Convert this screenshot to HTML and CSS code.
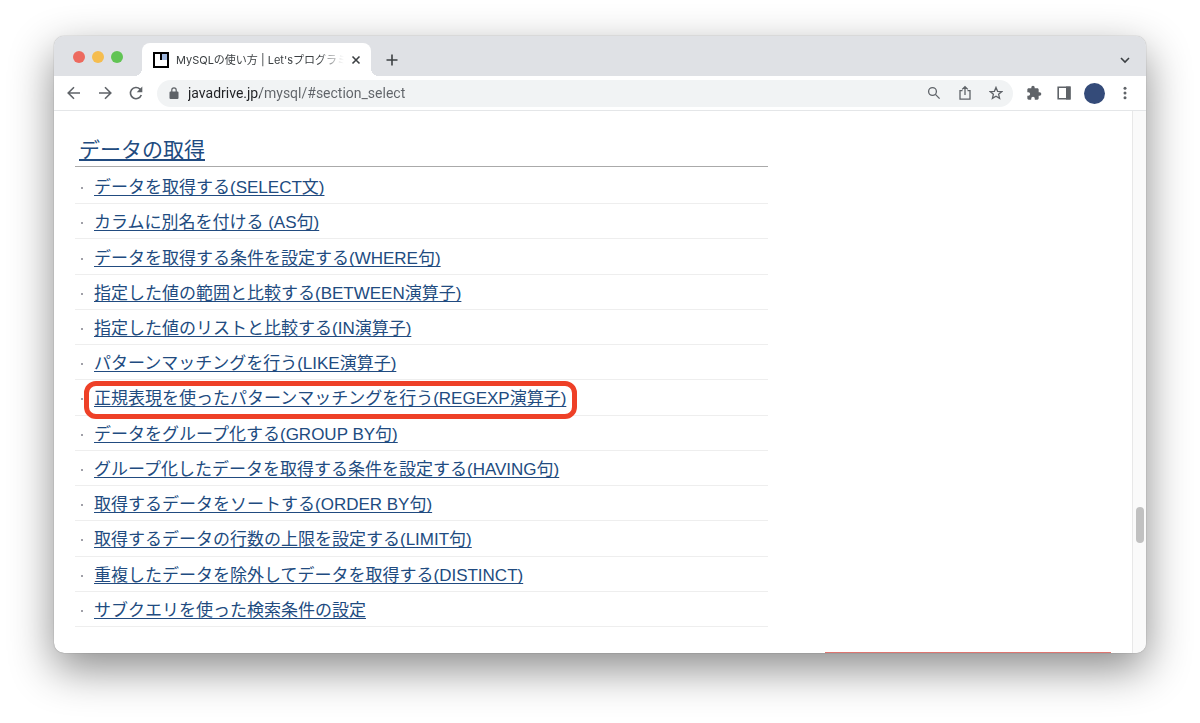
FILE: index.html
```html
<!DOCTYPE html>
<html lang="ja">
<head>
    <meta charset="UTF-8">
    <meta name="viewport" content="width=device-width, initial-scale=1.0">
    <title>MySQLの使い方 | Let'sプログラミング</title>
    <link rel="stylesheet" href="styles.css">
</head>
<body>
    <div class="window">
        <!-- tab bar -->
        <header class="tabbar">
            <div class="lights">
                <button class="red" aria-label="閉じる"></button>
                <button class="yellow" aria-label="最小化"></button>
                <button class="green" aria-label="最大化"></button>
            </div>
            <div class="tab">
                <svg class="favicon" width="16" height="16" viewBox="0 0 16 16">
                    <path fill="#000" d="M0 0h16v16H0z"/>
                    <path fill="#fff" d="M2 2h5v6h7v6H2z"/>
                    <path fill="#9db5dc" d="M9 2h5v6H9z"/>
                </svg>
                <span class="tab-title">MySQLの使い方 | Let'sプログラミ</span>
                <button aria-label="タブを閉じる">
                    <svg width="10" height="10" viewBox="0 0 10 10"><path d="M1.5 1.5l7 7M8.5 1.5l-7 7"/></svg>
                </button>
            </div>
            <button class="new-tab" aria-label="新しいタブ">
                <svg width="12" height="12" viewBox="0 0 12 12"><path d="M6 .5v11M.5 6h11"/></svg>
            </button>
            <button class="tab-search" aria-label="タブを検索">
                <svg width="10" height="10" viewBox="0 0 10 10"><path d="M1 3l4 4 4-4"/></svg>
            </button>
        </header>

        <!-- toolbar -->
        <nav class="toolbar">
            <button aria-label="戻る">
                <svg width="16" height="16" viewBox="0 0 16 16"><path d="M14 8H2.5M8 2.2L2.2 8 8 13.8"/></svg>
            </button>
            <button aria-label="進む">
                <svg width="16" height="16" viewBox="0 0 16 16"><path d="M2 8h11.5M8 2.2L13.8 8 8 13.8"/></svg>
            </button>
            <button aria-label="再読み込み">
                <svg width="16" height="16" viewBox="0 0 16 16"><path d="M13.3 10A5.600 5.600 0 1 1 12 4.100L13.500 5.600"/><path class="fill" d="M14.300 1.600v5.600H8.700z"/></svg>
            </button>
            <form class="omnibox" action="javascript:void(0);">
                <svg class="lock" width="10" height="12" viewBox="0 0 10 12"><path class="fill" d="M1.500 4.500h7a1 1 0 0 1 1 1V11a1 1 0 0 1-1 1h-7a1 1 0 0 1-1-1V5.500a1 1 0 0 1 1-1z"/><path d="M2.800 5V3a2.200 2.200 0 0 1 4.400 0v2" stroke-width="1.200"/></svg>
                <input type="text" name="url" aria-label="アドレス" value="javadrive.jp/mysql/#section_select">
                <button type="button" aria-label="ズーム">
                    <svg class="thin" width="14" height="14" viewBox="0 0 14 14"><circle cx="5.500" cy="5.500" r="3.900"/><path d="M8.400 8.400l4.200 4.200"/></svg>
                </button>
                <button type="button" aria-label="共有">
                    <svg class="thin" width="14" height="16" viewBox="0 0 14 16"><path d="M4.500 5.600H2v8.600h10V5.600H9.500M7 10V2M4.200 4.400L7 1.600l2.800 2.800"/></svg>
                </button>
                <button type="button" aria-label="ブックマーク">
                    <svg class="thin" width="14" height="14" viewBox="0 0 14 14"><path d="M7 1.400l1.600 3.900 4.200.3-3.200 2.700 1 4.100L7 10.200l-3.600 2.200 1-4.100L1.200 5.600l4.200-.3z"/></svg>
                </button>
            </form>
            <button aria-label="拡張機能">
                <svg width="16" height="16" viewBox="0 0 24 24"><path class="fill" d="M20.500 11H19V7c0-1.100-.9-2-2-2h-4V3.500a2.500 2.500 0 0 0-5 0V5H4c-1.100 0-2 .9-2 2v3.800h1.500a2.700 2.700 0 0 1 0 5.400H2V20c0 1.100.9 2 2 2h3.800v-1.500a2.700 2.700 0 0 1 5.400 0V22H17c1.100 0 2-.9 2-2v-4h1.500a2.500 2.500 0 0 0 0-5z"/></svg>
            </button>
            <button aria-label="サイドパネル">
                <svg width="14" height="14" viewBox="0 0 14 14"><path d="M1.200 1.300h11.600v11.400H1.200z"/><path class="fill" d="M9 .5h4.600v13H9z"/></svg>
            </button>
            <button class="avatar" aria-label="プロフィール"></button>
            <button class="menu" aria-label="メニュー">
                <svg width="4" height="14" viewBox="0 0 4 14"><g class="fill"><circle cx="2" cy="2.200" r="1.500"/><circle cx="2" cy="7" r="1.500"/><circle cx="2" cy="11.800" r="1.500"/></g></svg>
            </button>
        </nav>

        <!-- page -->
        <div class="view">
            <div class="page">
                <main>
                    <h3 id="section_select"><a href="#section_select">データの取得</a></h3>
                    <ul>
                        <li><a href="#">データを取得する(SELECT文)</a></li>
                        <li><a href="#">カラムに別名を付ける (AS句)</a></li>
                        <li><a href="#">データを取得する条件を設定する(WHERE句)</a></li>
                        <li><a href="#">指定した値の範囲と比較する(BETWEEN演算子)</a></li>
                        <li><a href="#">指定した値のリストと比較する(IN演算子)</a></li>
                        <li><a href="#">パターンマッチングを行う(LIKE演算子)</a></li>
                        <li><a href="#" class="marked">正規表現を使ったパターンマッチングを行う(REGEXP演算子)</a></li>
                        <li><a href="#">データをグループ化する(GROUP BY句)</a></li>
                        <li><a href="#">グループ化したデータを取得する条件を設定する(HAVING句)</a></li>
                        <li><a href="#">取得するデータをソートする(ORDER BY句)</a></li>
                        <li><a href="#">取得するデータの行数の上限を設定する(LIMIT句)</a></li>
                        <li><a href="#">重複したデータを除外してデータを取得する(DISTINCT)</a></li>
                        <li><a href="#">サブクエリを使った検索条件の設定</a></li>
                    </ul>
                </main>
                <aside></aside>
            </div>
            <div class="track"><div class="thumb"></div></div>
        </div>
    </div>
</body>
</html>
```
FILE: styles.css
```css
* {margin: 0; padding: 0; box-sizing: border-box;}
body {background-color: #ffffff; padding: 36px 54px 70px; font-family: 'Liberation Sans', 'Noto Sans CJK JP', sans-serif;}
button {border: none; background-color: transparent; display: flex; align-items: center; justify-content: center; flex-shrink: 0; cursor: pointer;}
svg {display: block; flex-shrink: 0; fill: none; stroke: #5f6368; stroke-width: 1.6;}
svg .fill {fill: #5f6368; stroke: none;}
svg.thin {stroke-width: 1.3;}

.window {border-radius: 10px; background-color: #ffffff; box-shadow: 0 0 1px rgba(0, 0, 0, 0.5), 0 16px 44px rgba(0, 0, 0, 0.46);}

/* tab bar */
.tabbar {height: 40px; background-color: #dfe1e5; border-radius: 10px 10px 0 0; display: flex; align-items: flex-end; padding: 0 16px 0 19px;}
.lights {display: flex; gap: 7px; height: 38px; align-items: center; margin-right: 19px;}
.lights button {width: 12px; height: 12px; border-radius: 50%;}
.lights .red {background-color: #ed6a5f;}
.lights .yellow {background-color: #f5bd4f;}
.lights .green {background-color: #61c454;}
.tab {position: relative; width: 229px; height: 33px; background-color: #ffffff; border-radius: 8px 8px 0 0; display: flex; align-items: center; padding: 0 10px 0 11px;}
.tab::before, .tab::after {content: ''; position: absolute; bottom: 0; width: 8px; height: 8px;}
.tab::before {left: -8px; background: radial-gradient(circle at 0 0, transparent 8px, #ffffff 8px);}
.tab::after {right: -8px; background: radial-gradient(circle at 100% 0, transparent 8px, #ffffff 8px);}
.tab-title {flex: 1; margin: 0 7px; overflow: hidden; white-space: nowrap; font: 11px/18px Inter, 'Noto Sans CJK JP', sans-serif; color: #3c4043; mask-image: linear-gradient(90deg, #000000 85%, transparent);}
.tab svg, .new-tab svg, .tab-search svg {stroke: #3c4043;}
.tab .favicon {stroke: none;}
.new-tab {width: 28px; height: 33px; margin-left: 7px;}
.tab-search {height: 33px; margin-left: auto;}

/* toolbar */
.toolbar {height: 35px; border-bottom: 1px solid #e4e6e8; display: flex; align-items: center; gap: 15px; padding: 0 19px 0 12px;}
.omnibox {flex: 1; height: 27px; border-radius: 14px; background-color: #f1f3f4; display: flex; align-items: center; gap: 17px; padding: 0 10px 0 12px; margin: 0 -2px;}
.omnibox input {flex: 1; min-width: 0; margin-left: -8px; border: none; outline: none; font: 14px/18px Roboto, 'Noto Sans CJK JP', sans-serif; color: transparent; background: linear-gradient(90deg, #202124 72px, #5f6368 72px); background-clip: text;}
.avatar {width: 21px; height: 21px; border-radius: 50%; background-color: #344b79; margin: 0 3px 0 -2px;}

/* page */
.view {display: flex; border-radius: 0 0 10px 10px; overflow: hidden;}
.page {flex: 1; display: flex; gap: 57px; padding: 23px 21px 0;}
main {flex: 1; padding-bottom: 26px;}
a {color: #214b80; text-decoration: underline; text-decoration-skip-ink: none; text-underline-offset: 2px;}
h3 {height: 33px; padding-left: 4px; border-bottom: 1px solid #aaaaaa; font-size: 21px; line-height: 32px; font-weight: 400;}
/* 13 even rows */
ul {list-style-type: none; display: grid; grid-auto-rows: 1fr; height: 458px; margin-top: 2px;}
li {display: flex; align-items: center; border-bottom: 1px solid #eeeeee; font-size: 17px; line-height: 26px; padding: 4px 0 0 6px;}
li::before {content: ''; width: 2px; height: 2px; margin-right: 11px; background-color: #a0a0a8;}
.marked {position: relative;}
.marked::after {content: ''; position: absolute; inset: -5px -11px -7px -10px; border: 5px solid #ee4027; border-radius: 12px;}
aside {width: 286px; align-self: flex-end; border-bottom: 1px solid #dd7570;}
.track {position: relative; width: 14px; background-color: #fafafa; border-left: 1px solid #e8e8e8;}
.thumb {position: absolute; top: 73%; right: 2px; width: 8px; height: 36px; border-radius: 4px; background-color: #c1c1c1;}

@media (max-width: 900px) {
    body {padding: 16px;}
    aside {display: none;}
}
```
